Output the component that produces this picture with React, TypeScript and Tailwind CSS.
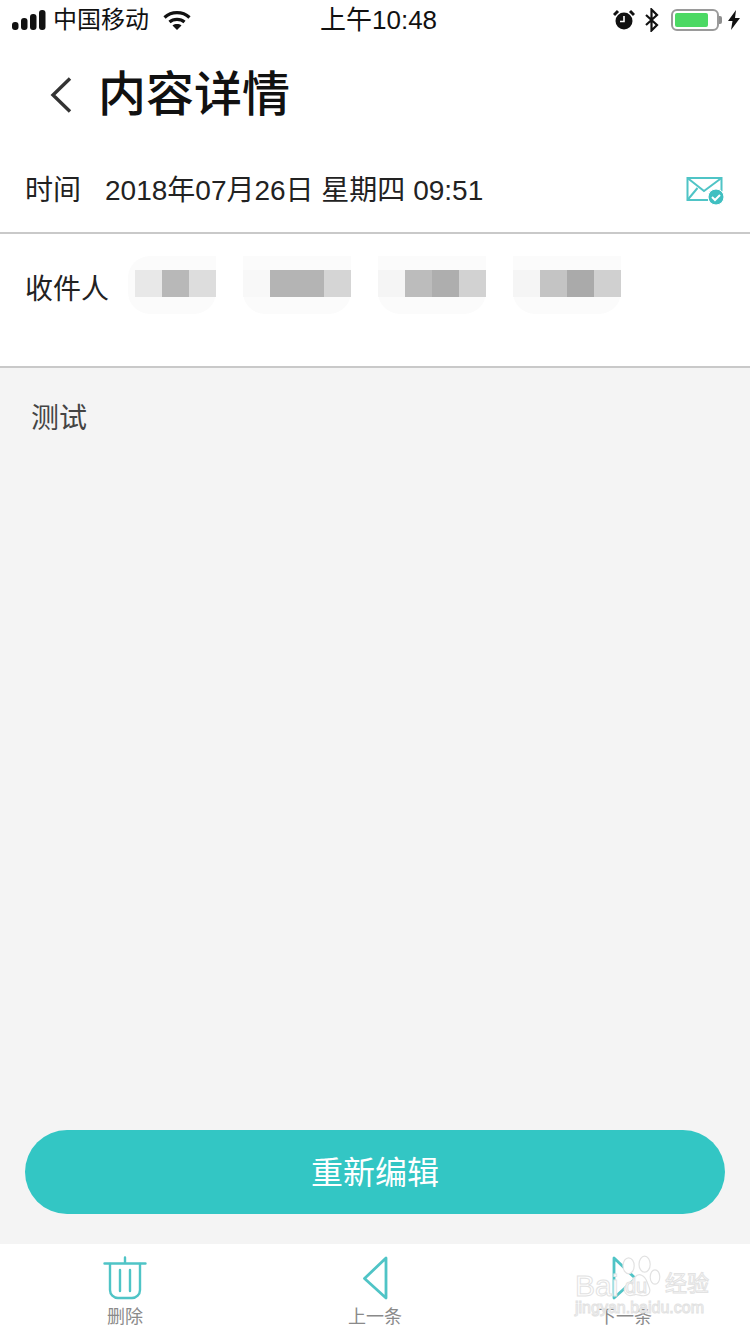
const FONT = "font-['Liberation_Sans','Noto_Sans_CJK_SC',sans-serif]";

function StatusBar() {
  return (
    <div className="flex h-[40px] items-center pl-[12px] pr-[10px] text-[24px] leading-none text-[#111]">
      <div className="flex w-[190px] items-center">
        <svg width="36" height="20" viewBox="0 0 36 20" fill="#111">
          <rect x="0" y="12" width="6.500" height="8" rx="3" />
          <rect x="9" y="8" width="6.500" height="12" rx="3" />
          <rect x="18" y="4" width="6.500" height="16" rx="3" />
          <rect x="27" y="0" width="6.500" height="20" rx="3" />
        </svg>
        <span className="ml-[5px]">中国移动</span>
        <svg className="ml-[14px]" width="28" height="20" viewBox="0 0 28 20" fill="none" stroke="#111" strokeWidth="3.2">
          <path d="M1.500 7.500C8.500 1 19.500 1 26.500 7.500" />
          <path d="M6.500 12C10.500 8.500 17.500 8.500 21.500 12" />
          <path d="M14 20L9.500 15.500C12 13.600 16 13.600 18.500 15.500Z" fill="#111" stroke="none" />
        </svg>
      </div>
      <span className="ml-[118px] text-[26px]">上午10:48</span>
      <div className="ml-auto flex items-center">
        <svg width="22" height="22" viewBox="0 0 22 22">
          <path d="M1 6L5 2M21 6L17 2" stroke="#111" strokeWidth="3" />
          <circle cx="11" cy="12" r="8.500" fill="#111" />
          <path d="M11 7v5.500H7" stroke="#fff" strokeWidth="1.600" fill="none" />
        </svg>
        <svg className="ml-[9px]" width="16" height="24" viewBox="0 0 16 24" fill="none" stroke="#111" strokeWidth="2.200">
          <path d="M2 7l11 10-5.500 5.500V1.500L13 7 2 17" />
        </svg>
        <div className="ml-[11px] flex h-[22px] w-[48px] items-center rounded-[6px] border-2 border-[#9a9a9a] p-[2px]">
          <div className="h-full w-[33px] rounded-[2px] bg-[#4cd964]" />
        </div>
        <div className="h-[8px] w-[3px] rounded-r-[2px] bg-[#8f8f8f]" />
        <svg className="ml-[6px]" width="12" height="20" viewBox="0 0 12 20" fill="#111">
          <path d="M8 0L0 11h4.500L3 20l9-12H7z" />
        </svg>
      </div>
    </div>
  );
}

const RECIPIENTS = [
  { wide: false, cells: ['#e8e8e8', '#b8b8b8', '#dddddd'] },
  { wide: true, cells: ['#f8f8f8', '#b4b4b4', '#b4b4b4', '#d5d5d5'] },
  { wide: true, cells: ['#f5f5f5', '#bcbcbc', '#aeaeae', '#d2d2d2'] },
  { wide: true, cells: ['#f5f5f5', '#c4c4c4', '#aaaaaa', '#d0d0d0'] },
];

function RecipientChips() {
  return (
    <div className="mt-[22px] ml-[19px] flex gap-[27px]">
      {RECIPIENTS.map((r, i) => (
        <div key={i} className={`flex h-[58px] flex-col rounded-b-[22px] bg-[#fbfbfb] pt-[14px] ${r.wide ? '' : 'pl-[7px] rounded-tl-[22px]'}`}>
          <div className="flex">
            {r.cells.map((c, j) => (
              <div key={j} className="h-[27px] w-[27px]" style={{ backgroundColor: c }} />
            ))}
          </div>
        </div>
      ))}
    </div>
  );
}

function TabItem({ label, children }: { label: string; children: React.ReactNode }) {
  return (
    <div className="flex w-[250px] flex-col items-center pt-[12px]">
      <div className="h-[44px]">{children}</div>
      <span className="mt-[5px] text-[18px] leading-[24px] text-[#8a8a8a]">{label}</span>
    </div>
  );
}

function Watermark() {
  const stroke = "[-webkit-text-stroke:1px_#e2e2e2] text-white";
  return (
    <div className="pointer-events-none absolute left-[575px] top-[1252px] h-[72px] w-[140px]">
      <svg className="absolute left-[36px] top-0" width="56" height="50" viewBox="0 0 70 56" fill="#fff" stroke="#e2e2e2" strokeWidth="1.500">
        <ellipse cx="22" cy="14" rx="7" ry="10" />
        <ellipse cx="42" cy="12" rx="7" ry="10" />
        <ellipse cx="55" cy="28" rx="6" ry="9" />
        <path d="M18 48c-6-8 6-10 12-20 5-6 12-2 15 6 3 8 6 12 1 16-6 4-12-1-16 0-4 1-8 3-12-2z" />
      </svg>
      <span className={`absolute left-0 top-[19px] text-[30px] leading-none ${stroke}`}>Bai</span>
      <span className={`absolute left-[50px] top-[24px] text-[20px] leading-none ${stroke}`}>du</span>
      <span className={`absolute left-[90px] top-[21px] text-[22px] leading-none ${stroke}`}>经验</span>
      <span className={`absolute left-0 top-[48px] text-[16px] leading-none ${stroke}`}>jingyan.baidu.com</span>
    </div>
  );
}

export default function App() {
  return (
    <div className={`${FONT} relative flex h-[1334px] w-[750px] flex-col overflow-hidden bg-white`}>
      <StatusBar />

      <div className="flex h-[110px] items-center pb-[1px] pl-[50px]">
        <svg width="22" height="36" viewBox="0 0 22 36" fill="none" stroke="#333" strokeWidth="3.400">
          <path d="M20 1.500L3 18l17 16.500" />
        </svg>
        <h1 className="ml-[26px] text-[48px] font-medium leading-none text-[#111]">内容详情</h1>
      </div>

      <div className="flex h-[84px] items-center justify-between border-b-2 border-[#c9c9c9] pl-[25px] pr-[26px] text-[28px] text-[#222]">
        <div className="flex items-center">
          <span>时间</span>
          <span className="ml-[24px]">2018年07月26日 星期四 09:51</span>
        </div>
        <svg width="38" height="30" viewBox="0 0 38 30" fill="none" stroke="#4fc4c6" strokeWidth="2">
          <path d="M22 24H1.500V2h34v13" />
          <path d="M1.500 2L18 15 35.500 2M1.500 24l10-12" />
          <circle cx="30" cy="21" r="8" fill="#3fbfc1" stroke="#fff" strokeWidth="1" />
          <path d="M26 21l3 3 5-5" stroke="#fff" strokeWidth="2" />
        </svg>
      </div>

      <div className="flex h-[134px] border-b-2 border-[#c9c9c9]">
        <span className="mt-[38px] ml-[25px] text-[28px] leading-[36px] text-[#222]">收件人</span>
        <RecipientChips />
      </div>

      <div className="flex flex-1 flex-col bg-[#f4f4f4] px-[25px]">
        <p className="mt-[35px] ml-[6px] text-[28px] leading-[32px] text-[#444]">测试</p>
        <button className="mt-auto mb-[30px] h-[84px] w-full rounded-full bg-[#33c6c4] pt-[2px] text-[32px] text-white">
          重新编辑
        </button>
      </div>

      <div className="flex h-[90px] bg-white">
        <TabItem label="删除">
          <svg width="44" height="44" viewBox="0 0 44 44" fill="none" stroke="#4fc4c6" strokeWidth="2.400" strokeLinecap="round">
            <path d="M1.500 7.500h41M22 1.500v6" />
            <path d="M7 8v26a8 8 0 0 0 8 8h14a8 8 0 0 0 8-8V8" />
            <path d="M17 14v21M27 14v21" />
          </svg>
        </TabItem>
        <TabItem label="上一条">
          <svg width="26" height="44" viewBox="0 0 26 44" fill="none" stroke="#4fc4c6" strokeWidth="2.800" strokeLinejoin="round">
            <path d="M24 2v40L2.500 22.500Z" />
          </svg>
        </TabItem>
        <TabItem label="下一条">
          <svg width="26" height="44" viewBox="0 0 26 44" fill="none" stroke="#4fc4c6" strokeWidth="2.800" strokeLinejoin="round">
            <path d="M2 2v40l21.500-19.500Z" />
          </svg>
        </TabItem>
      </div>

      <Watermark />
    </div>
  );
}
